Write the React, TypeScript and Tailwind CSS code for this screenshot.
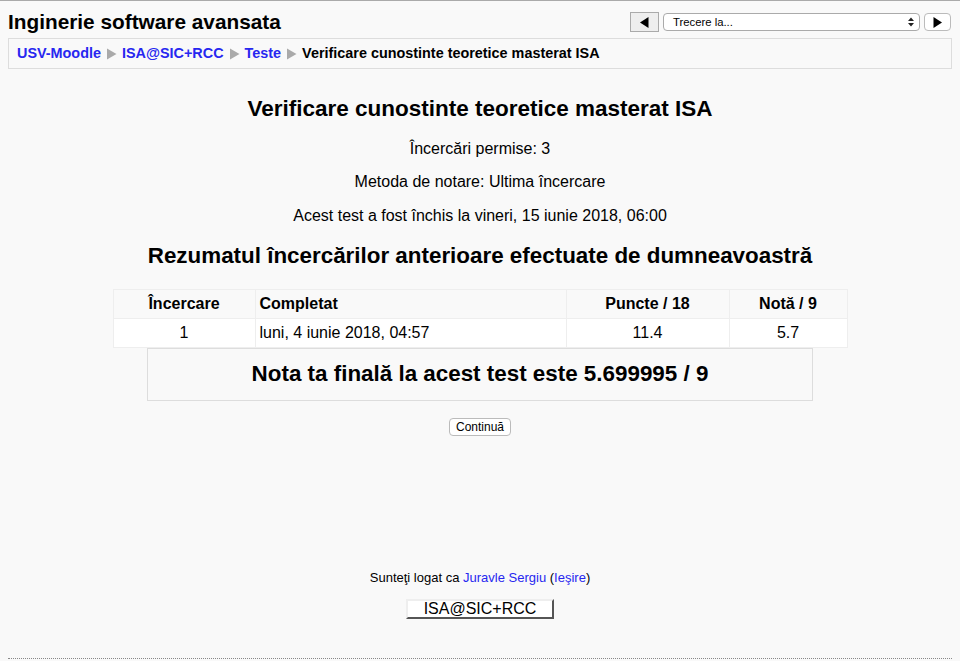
import React from "react";

const Sep = () => (
  <svg width="11" height="12" viewBox="0 0 11 12" className="mx-[5px] inline-block">
    <path d="M1 0.5 L10.5 6 L1 11.5 Z" fill="#aaaaaa" />
  </svg>
);

export default function App() {
  const font = { fontFamily: '"Liberation Sans", Arial, Helvetica, sans-serif' };

  return (
    <div className="min-h-[661px] bg-[#f9f9f9] border-t border-[#aaaaaa] text-black" style={font}>
      {/* Header */}
      <div className="flex items-center justify-between pl-2 pr-[9px] pt-[9px] h-[33px]">
        <h1 className="text-[20.8px] font-bold leading-none">Inginerie software avansata</h1>
        <div className="flex items-center">
          <button className="w-[29px] h-[20px] flex items-center justify-center border border-[#aaaaaa] bg-[#eeeeee]">
            <svg width="9" height="11" viewBox="0 0 9 11">
              <path d="M8.5 0 L0 5.5 L8.5 11 Z" fill="#000" />
            </svg>
          </button>
          <div className="ml-[4px] w-[257px] h-[18px] border border-[#aaaaaa] rounded-[4px] bg-white flex items-center justify-between pl-[9px] pr-[5px]">
            <span className="text-[11.3px]">Trecere la...</span>
            <svg width="6" height="10" viewBox="0 0 6 10">
              <path d="M0 4 L3 0.5 L6 4 Z M0 6 L3 9.5 L6 6 Z" fill="#222" />
            </svg>
          </div>
          <button className="ml-[4px] w-[27px] h-[18px] flex items-center justify-center border border-[#bbbbbb] rounded-[4px] bg-white">
            <svg width="9" height="11" viewBox="0 0 9 11">
              <path d="M0.5 0 L9 5.5 L0.5 11 Z" fill="#000" />
            </svg>
          </button>
        </div>
      </div>

      {/* Breadcrumb */}
      <div className="mx-2 mt-[4px] h-[31px] border border-[#dddddd] flex items-center px-2 text-[14.4px] font-bold">
        <a className="text-[#2727f0]">USV-Moodle</a>
        <Sep />
        <a className="text-[#2727f0]">ISA@SIC+RCC</a>
        <Sep />
        <a className="text-[#2727f0]">Teste</a>
        <Sep />
        <span>Verificare cunostinte teoretice masterat ISA</span>
      </div>

      {/* Content */}
      <div className="flex flex-col items-center">
        <h2 className="mt-[27px] text-[22.5px] font-bold leading-[26px]">Verificare cunostinte teoretice masterat ISA</h2>
        <p className="mt-[17px] text-[16px] leading-[19px]">Încercări permise: 3</p>
        <p className="mt-[14px] text-[16px] leading-[19px]">Metoda de notare: Ultima încercare</p>
        <p className="mt-[15px] text-[16px] leading-[19px]">Acest test a fost închis la vineri, 15 iunie 2018, 06:00</p>
        <h3 className="mt-[18px] text-[22.4px] font-bold leading-[26px]">Rezumatul încercărilor anterioare efectuate de dumneavoastră</h3>

        <table className="mt-[20px] w-[735px] border-collapse text-[16px]">
          <thead>
            <tr className="h-[29px]">
              <th className="w-[142px] border border-[#eeeeee] font-bold text-center">Încercare</th>
              <th className="w-[311px] border border-[#eeeeee] font-bold text-left pl-[4px]">Completat</th>
              <th className="w-[163px] border border-[#eeeeee] font-bold text-center">Puncte / 18</th>
              <th className="border border-[#eeeeee] font-bold text-center">Notă / 9</th>
            </tr>
          </thead>
          <tbody>
            <tr className="h-[29px] bg-white">
              <td className="border border-[#eeeeee] text-center">1</td>
              <td className="border border-[#eeeeee] text-left pl-[4px]">luni, 4 iunie 2018, 04:57</td>
              <td className="border border-[#eeeeee] text-center">11.4</td>
              <td className="border border-[#eeeeee] text-center">5.7</td>
            </tr>
          </tbody>
        </table>

        <div className="w-[666px] h-[53px] border border-[#dddddd] flex items-center justify-center pb-[2px]">
          <span className="text-[22.4px] font-bold">Nota ta finală la acest test este 5.699995 / 9</span>
        </div>

        <button className="mt-[17px] h-[18px] px-[6px] bg-white border border-[#bbbbbb] rounded-[4px] text-[12px] leading-none">
          Continuă
        </button>

        {/* Footer */}
        <p className="mt-[134px] text-[13px] leading-[15px]">
          Sunteţi logat ca <a className="text-[#2727f0]">Juravle Sergiu</a> (<a className="text-[#2727f0]">Ieşire</a>)
        </p>
        <button className="mt-[14px] w-[148px] h-[20px] bg-white border-2 border-t-[#eeeeee] border-l-[#eeeeee] border-r-[#555555] border-b-[#555555] text-[16px] leading-none">
          ISA@SIC+RCC
        </button>
      </div>
      <div className="mx-2 mt-[39px] border-t border-dotted border-[#888888]" />
    </div>
  );
}
